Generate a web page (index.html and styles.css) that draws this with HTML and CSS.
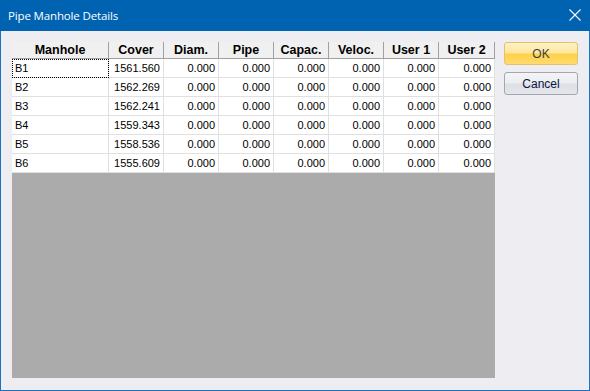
FILE: index.html
```html
<!DOCTYPE html>
<html>
<head>
<meta charset="utf-8">
<link rel="stylesheet" href="styles.css">
</head>
<body>
<div class="window">
  <div class="titlebar">
    <span class="title">Pipe Manhole Details</span>
    <svg class="close" width="12" height="12" viewBox="0 0 12 12"><path d="M0.5 0.5 L11.5 11.5 M11.5 0.5 L0.5 11.5" stroke="#fff" stroke-width="1.1" fill="none"/></svg>
  </div>
  <div class="content">
    <div class="grid">
      <div class="hrow">
        <div class="hc">Manhole</div><div class="hc">Cover</div><div class="hc">Diam.</div><div class="hc">Pipe</div><div class="hc">Capac.</div><div class="hc">Veloc.</div><div class="hc">User 1</div><div class="hc last">User 2</div>
      </div>
      <div class="row"><div class="c name focus"><span>B1</span></div><div class="c">1561.560</div><div class="c">0.000</div><div class="c">0.000</div><div class="c">0.000</div><div class="c">0.000</div><div class="c">0.000</div><div class="c">0.000</div></div>
      <div class="row"><div class="c name">B2</div><div class="c">1562.269</div><div class="c">0.000</div><div class="c">0.000</div><div class="c">0.000</div><div class="c">0.000</div><div class="c">0.000</div><div class="c">0.000</div></div>
      <div class="row"><div class="c name">B3</div><div class="c">1562.241</div><div class="c">0.000</div><div class="c">0.000</div><div class="c">0.000</div><div class="c">0.000</div><div class="c">0.000</div><div class="c">0.000</div></div>
      <div class="row"><div class="c name">B4</div><div class="c">1559.343</div><div class="c">0.000</div><div class="c">0.000</div><div class="c">0.000</div><div class="c">0.000</div><div class="c">0.000</div><div class="c">0.000</div></div>
      <div class="row"><div class="c name">B5</div><div class="c">1558.536</div><div class="c">0.000</div><div class="c">0.000</div><div class="c">0.000</div><div class="c">0.000</div><div class="c">0.000</div><div class="c">0.000</div></div>
      <div class="row"><div class="c name">B6</div><div class="c">1555.609</div><div class="c">0.000</div><div class="c">0.000</div><div class="c">0.000</div><div class="c">0.000</div><div class="c">0.000</div><div class="c">0.000</div></div>
    </div>
    <div class="buttons">
      <button class="btn ok">OK</button>
      <button class="btn cancel">Cancel</button>
    </div>
  </div>
</div>
</body>
</html>
```
FILE: styles.css
```css
html, body {
  margin: 0;
  padding: 0;
}
body {
  width: 590px;
  height: 391px;
  overflow: hidden;
}
.window {
  width: 590px;
  height: 391px;
  box-sizing: border-box;
  border: 1px solid #1a72c2;
  border-top: none;
  background: #eeedf2;
  display: flex;
  flex-direction: column;
}
.titlebar {
  height: 31px;
  margin: 0 -1px;
  background: #0063b1;
  display: flex;
  align-items: center;
  justify-content: space-between;
  padding: 0 9px 0 8px;
  flex-shrink: 0;
}
.title {
  color: #fff;
  font-family: "Open Sans", "Noto Sans", sans-serif;
  font-size: 11.5px;
  letter-spacing: -0.15px;
  margin-top: -1px;
}
.close {
  display: block;
  margin-top: -2px;
}
.content {
  flex: 1;
  display: flex;
  padding: 11px 11px 12px 11px;
  gap: 9px;
}
.grid {
  width: 483px;
  height: 336px;
  background: #ababab;
  font-family: "Liberation Sans", Arial, sans-serif;
  font-size: 11px;
  color: #000;
}
.hrow, .row {
  display: grid;
  grid-template-columns: 97px repeat(6, 55px) 56px;
}
.hrow {
  height: 17px;
  background: #f0f0f0;
}
.hc {
  box-sizing: border-box;
  border-right: 1px solid #a0a0a0;
  border-bottom: 1px solid #a0a0a0;
  font-weight: bold;
  font-size: 12.5px;
  text-align: center;
  line-height: 16px;
}
.row {
  height: 19px;
  background: #fff;
}
.c {
  box-sizing: border-box;
  border-right: 1px solid #e0e0e0;
  border-bottom: 1px solid #e0e0e0;
  text-align: right;
  padding-right: 3px;
  line-height: 18px;
}
.c.name {
  text-align: left;
  padding-left: 3px;
}
.c.focus {
  outline: 1px dotted #000;
  outline-offset: -1px;
}
.buttons {
  display: flex;
  flex-direction: column;
  gap: 7px;
}
.btn {
  width: 74px;
  height: 23px;
  box-sizing: border-box;
  border-radius: 3px;
  font-family: "Liberation Sans", Arial, sans-serif;
  font-size: 12px;
  padding: 0;
}
.ok {
  border: 1px solid #e2c36a;
  background: linear-gradient(#fdf1c6 0%, #fde7a0 45%, #ffd048 55%, #ffdc70 100%);
  color: #3e3e3e;
}
.cancel {
  border: 1px solid #a3a7ae;
  background: linear-gradient(#f4f4f6 0%, #eceef1 45%, #dcdfe5 55%, #e4e6ea 100%);
  color: #0b1440;
}
```
